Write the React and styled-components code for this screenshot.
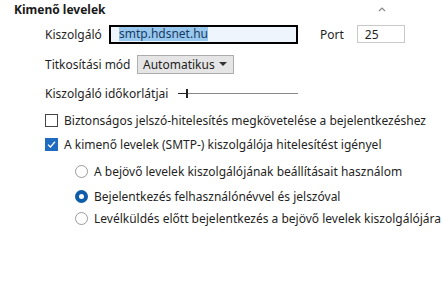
import React from "react";
import styled, { createGlobalStyle } from "styled-components";

const GlobalStyle = createGlobalStyle`
  html, body {
    margin: 0;
    padding: 0;
    background: #fff;
  }
  body {
    font-family: "Noto Sans", "Open Sans", sans-serif;
    font-size: 12px;
    color: #1f1f1f;
  }
`;

const Panel = styled.section`
  width: 442px;
  height: 286px;
  box-sizing: border-box;
  padding: 0 0 0 14px;
`;

const Header = styled.div`
  display: flex;
  align-items: center;
  justify-content: space-between;
  height: 18px;
  padding-right: 56px;
`;

const Title = styled.h2`
  margin: 0;
  font-size: 12px;
  font-weight: 700;
  color: #1a1a1a;
`;

const Chevron = styled.span`
  display: flex;
  color: #888;
`;

const Row = styled.div`
  display: flex;
  align-items: center;
  height: 20px;
  margin-top: ${(p) => p.$gap || 0}px;
  padding-left: ${(p) => p.$indent || 31}px;
`;

const Label = styled.span`
  width: ${(p) => p.$w || "auto"}px;
  flex: none;
  white-space: nowrap;
`;

const ServerInput = styled.div`
  width: 189px;
  height: 19px;
  box-sizing: border-box;
  border: 2px solid #000;
  background: #eef5fc;
  display: flex;
  align-items: center;
  padding-left: 8px;

  span {
    background: #99c9ef;
    color: #1a3c63;
    line-height: 14px;
  }
`;

const PortLabel = styled.span`
  margin-left: 22px;
  margin-right: 13px;
`;

const PortInput = styled.div`
  width: 48px;
  height: 18px;
  box-sizing: border-box;
  border: 1px solid #c9c9c9;
  padding-left: 7px;
  display: flex;
  align-items: center;
`;

const Select = styled.div`
  width: 97px;
  height: 19px;
  box-sizing: border-box;
  border: 1px solid #adadad;
  background: #e5e5e5;
  display: flex;
  align-items: center;
  justify-content: space-between;
  padding: 0 6px 0 5px;
`;

const Arrow = styled.span`
  width: 0;
  height: 0;
  border-left: 4px solid transparent;
  border-right: 4px solid transparent;
  border-top: 4px solid #333;
`;

const Slider = styled.div`
  position: relative;
  width: 120px;
  height: 12px;
  margin-left: 10px;

  &::before {
    content: "";
    position: absolute;
    left: 0;
    right: 0;
    top: 6px;
    height: 1px;
    background: #888;
    box-shadow: inset 9px 0 0 #222;
  }
  &::after {
    content: "";
    position: absolute;
    left: 8px;
    top: 2px;
    width: 2px;
    height: 9px;
    background: #222;
  }
`;

const Box = styled.span`
  width: 13px;
  height: 13px;
  box-sizing: border-box;
  flex: none;
  margin-right: 6px;
  border: 1px solid ${(p) => (p.$checked ? "#1e6bc0" : "#444")};
  background: ${(p) => (p.$checked ? "#1e6bc0" : "#fff")};
  display: flex;
  align-items: center;
  justify-content: center;
`;

const Radio = styled.span`
  width: 13px;
  height: 13px;
  box-sizing: border-box;
  flex: none;
  margin-right: 6px;
  border-radius: 50%;
  border: ${(p) => (p.$checked ? "4px solid #0f5da8" : "1px solid #9a9a9a")};
  background: #fff;
`;

function Check({ checked, children, gap }) {
  return (
    <Row $gap={gap}>
      <Box $checked={checked}>
        {checked && (
          <svg width="9" height="9" viewBox="0 0 9 9">
            <path d="M1 4.6 L3.4 7 L8 1.8" fill="none" stroke="#fff" strokeWidth="1.3" />
          </svg>
        )}
      </Box>
      <span>{children}</span>
    </Row>
  );
}

function Option({ checked, children, gap }) {
  return (
    <Row $gap={gap} $indent={61}>
      <Radio $checked={checked} />
      <span>{children}</span>
    </Row>
  );
}

export default function App() {
  return (
    <>
      <GlobalStyle />
      <Panel>
        <Header>
          <Title>Kimenő levelek</Title>
          <Chevron>
            <svg width="8" height="5" viewBox="0 0 8 5">
              <path d="M1 4 L4 1 L7 4" fill="none" stroke="#888" strokeWidth="1.2" />
            </svg>
          </Chevron>
        </Header>

        <Row $gap={6}>
          <Label $w={64}>Kiszolgáló</Label>
          <ServerInput>
            <span>smtp.hdsnet.hu</span>
          </ServerInput>
          <PortLabel>Port</PortLabel>
          <PortInput>25</PortInput>
        </Row>

        <Row $gap={10}>
          <Label $w={92}>Titkosítási mód</Label>
          <Select>
            <span>Automatikus</span>
            <Arrow />
          </Select>
        </Row>

        <Row $gap={9}>
          <Label>Kiszolgáló időkorlátjai</Label>
          <Slider />
        </Row>

        <Check gap={7}>Biztonságos jelszó-hitelesítés megkövetelése a bejelentkezéshez</Check>
        <Check gap={4} checked>
          A kimenő levelek (SMTP-) kiszolgálója hitelesítést igényel
        </Check>

        <Option gap={7}>A bejövő levelek kiszolgálójának beállításait használom</Option>
        <Option gap={5} checked>
          Bejelentkezés felhasználónévvel és jelszóval
        </Option>
        <Option gap={2}>Levélküldés előtt bejelentkezés a bejövő levelek kiszolgálójára</Option>
      </Panel>
    </>
  );
}
